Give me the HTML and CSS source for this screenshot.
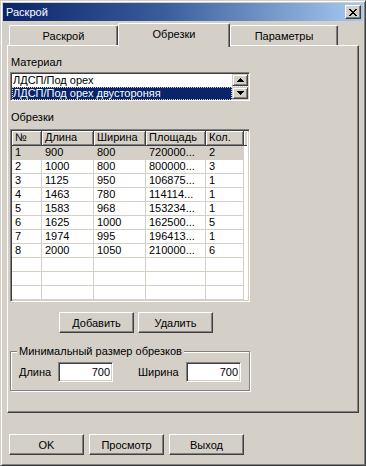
FILE: index.html
```html
<!DOCTYPE html>
<html lang="ru">
<head>
    <meta charset="UTF-8">
    <title>Раскрой</title>
    <link rel="stylesheet" href="styles.css">
</head>
<body>
    <div class="window">
        <div class="titlebar">
            <span class="title">Раскрой</span>
            <button class="close-btn" aria-label="Закрыть">
                <svg width="8" height="7" viewBox="0 0 8 7"><path d="M0 0h2v1H0z M6 0h2v1H6z M1 1h2v1H1z M5 1h2v1H5z M2 2h4v1H2z M3 3h2v1H3z M2 4h4v1H2z M1 5h2v1H1z M5 5h2v1H5z M0 6h2v1H0z M6 6h2v1H6z" fill="#000"/></svg>
            </button>
        </div>

        <div class="tabs">
            <div class="tab tab-first">Раскрой</div>
            <div class="tab tab-active">Обрезки</div>
            <div class="tab tab-last">Параметры</div>
        </div>

        <div class="panel">
            <div class="caption caption-top">Материал</div>
            <div class="listbox sunken">
                <div class="list-items">
                    <div class="list-item">ЛДСП/Под орех</div>
                    <div class="list-item selected">ЛДСП/Под орех двустороняя</div>
                </div>
                <div class="vscroll">
                    <div class="scroll-btn">
                        <svg width="7" height="4" viewBox="0 0 7 4"><path d="M3 0h1v1h1v1h1v1h1v1H0V3h1V2h1V1h1z" fill="#000"/></svg>
                    </div>
                    <div class="scroll-track"></div>
                    <div class="scroll-btn">
                        <svg width="7" height="4" viewBox="0 0 7 4"><path d="M0 0h7v1H6v1H5v1H4v1H3V3H2V2H1V1H0z" fill="#000"/></svg>
                    </div>
                </div>
            </div>

            <div class="caption">Обрезки</div>
            <div class="grid sunken">
                <div class="grid-table">
                    <div class="gh">№</div><div class="gh">Длина</div><div class="gh">Ширина</div><div class="gh">Площадь</div><div class="gh">Кол.</div><div class="gh gh-fill"></div>

                    <div class="gc sel">1</div><div class="gc sel">900</div><div class="gc sel">800</div><div class="gc sel">720000...</div><div class="gc sel">2</div><div class="gc gc-fill"></div>
                    <div class="gc">2</div><div class="gc">1000</div><div class="gc">800</div><div class="gc">800000...</div><div class="gc">3</div><div class="gc gc-fill"></div>
                    <div class="gc">3</div><div class="gc">1125</div><div class="gc">950</div><div class="gc">106875...</div><div class="gc">1</div><div class="gc gc-fill"></div>
                    <div class="gc">4</div><div class="gc">1463</div><div class="gc">780</div><div class="gc">114114...</div><div class="gc">1</div><div class="gc gc-fill"></div>
                    <div class="gc">5</div><div class="gc">1583</div><div class="gc">968</div><div class="gc">153234...</div><div class="gc">1</div><div class="gc gc-fill"></div>
                    <div class="gc">6</div><div class="gc">1625</div><div class="gc">1000</div><div class="gc">162500...</div><div class="gc">5</div><div class="gc gc-fill"></div>
                    <div class="gc">7</div><div class="gc">1974</div><div class="gc">995</div><div class="gc">196413...</div><div class="gc">1</div><div class="gc gc-fill"></div>
                    <div class="gc">8</div><div class="gc">2000</div><div class="gc">1050</div><div class="gc">210000...</div><div class="gc">6</div><div class="gc gc-fill"></div>

                    <div class="gc"></div><div class="gc"></div><div class="gc"></div><div class="gc"></div><div class="gc"></div><div class="gc gc-fill"></div>
                    <div class="gc"></div><div class="gc"></div><div class="gc"></div><div class="gc"></div><div class="gc"></div><div class="gc gc-fill"></div>
                    <div class="gc"></div><div class="gc"></div><div class="gc"></div><div class="gc"></div><div class="gc"></div><div class="gc gc-fill"></div>
                </div>
            </div>

            <div class="grid-actions">
                <button class="btn">Добавить</button>
                <button class="btn">Удалить</button>
            </div>

            <fieldset class="group">
                <legend>Минимальный размер обрезков</legend>
                <div class="group-row">
                    <label class="field-label" for="minLen">Длина</label>
                    <input class="field sunken" id="minLen" type="text" value="700">
                    <label class="field-label field-label-second" for="minWid">Ширина</label>
                    <input class="field sunken" id="minWid" type="text" value="700">
                </div>
            </fieldset>
        </div>

        <div class="footer">
            <button class="btn">OK</button>
            <button class="btn">Просмотр</button>
            <button class="btn">Выход</button>
        </div>
    </div>
</body>
</html>
```

FILE: styles.css
```css
* {
    margin: 0;
    padding: 0;
    box-sizing: border-box;
}

body {
    font-family: "Liberation Sans", Arial, sans-serif;
    font-size: 11px;
    line-height: 13px;
    color: #000;
    background: #d4d0c8;
}

.window {
    width: 366px;
    height: 466px;
    background: #d4d0c8;
    border: 1px solid;
    border-color: #d4d0c8 #404040 #404040 #d4d0c8;
    box-shadow: inset 1px 1px #fff, inset -1px -1px #808080;
    padding: 2px;
}

/* заголовок окна */
.titlebar {
    height: 18px;
    display: flex;
    align-items: center;
    padding: 0 2px 0 3px;
    background: linear-gradient(to right, #0a246a, #3a5e9c 45%, #a6caf0);
}

.title {
    color: #fff;
    font-size: 11px;
}

.close-btn {
    margin-left: auto;
    width: 16px;
    height: 14px;
    display: flex;
    align-items: center;
    justify-content: center;
    background: #d4d0c8;
    border: 1px solid;
    border-color: #fff #404040 #404040 #fff;
    box-shadow: inset -1px -1px #808080;
}

/* вкладки */
.tabs {
    display: flex;
    align-items: flex-end;
    height: 22px;
    margin: 2px 4px 0;
    padding-left: 2px;
}

.tab {
    height: 20px;
    padding-top: 4px;
    text-align: center;
    background: #d4d0c8;
    border-top: 1px solid #fff;
    border-left: 1px solid #fff;
    border-right: 1px solid #404040;
    box-shadow: inset -1px 0 #808080;
    border-radius: 2px 2px 0 0;
}

.tab-first {
    width: 109px;
}

.tab-active {
    width: 112px;
    height: 24px;
    margin-bottom: -2px;
    position: relative;
    z-index: 1;
}

.tab-last {
    width: 108px;
}

.panel {
    height: 368px;
    margin: 0 4px;
    padding: 0 2px;
    border: 1px solid;
    border-color: #fff #404040 #404040 #fff;
    box-shadow: inset -1px -1px #808080;
}

.caption {
    margin-top: 10px;
    padding-left: 1px;
}

.sunken {
    border: 1px solid;
    border-color: #808080 #fff #fff #808080;
    padding: 1px;
    box-shadow: inset 1px 1px #404040, inset -1px -1px #d4d0c8;
}

/* список материалов */
.listbox {
    width: 240px;
    height: 29px;
    margin-top: 3px;
    display: flex;
    overflow: hidden;
    background: #fff;
}

.list-items {
    flex: 1;
    background: #fff;
}

.list-item {
    height: 13px;
    padding-left: 1px;
    white-space: nowrap;
}

.list-item.selected {
    background: #0a246a;
    color: #fff;
    outline: 1px dotted #d4d0c8;
    outline-offset: -1px;
}

.vscroll {
    width: 16px;
    display: flex;
    flex-direction: column;
}

.scroll-btn {
    height: 12px;
    display: flex;
    align-items: center;
    justify-content: center;
    background: #d4d0c8;
    border: 1px solid;
    border-color: #d4d0c8 #404040 #404040 #d4d0c8;
    box-shadow: inset 1px 1px #fff, inset -1px -1px #808080;
}

.scroll-track {
    flex: 1;
    background: repeating-conic-gradient(#fff 0 25%, #d4d0c8 0 50%) 0 0 / 2px 2px;
}

/* таблица обрезков */
.grid {
    width: 240px;
    height: 173px;
    margin-top: 5px;
    overflow: hidden;
    background: #fff;
}

.grid-table {
    display: grid;
    grid-template-columns: 30px 52px 52px 60px 38px 3px;
    grid-template-rows: 15px;
    grid-auto-rows: 14px;
    background: #fff;
}

.gh {
    padding-left: 3px;
    line-height: 13px;
    background: #d4d0c8;
    border-right: 1px solid #404040;
    border-bottom: 1px solid #404040;
    box-shadow: inset 1px 1px #fff, inset -1px -1px #808080;
    white-space: nowrap;
}

.gh-fill {
    border-right: none;
    box-shadow: inset 1px 1px #fff;
}

.gc {
    padding-left: 3px;
    line-height: 13px;
    border-right: 1px solid #d4d0c8;
    border-bottom: 1px solid #d4d0c8;
    white-space: nowrap;
    overflow: hidden;
}

.gc.sel {
    background: #d4d0c8;
}

.gc-fill {
    border: none;
}

.grid-actions {
    display: flex;
    gap: 4px;
    margin: 10px 0 0 49px;
}

/* кнопки */
.btn {
    width: 75px;
    height: 21px;
    font-family: "Liberation Sans", Arial, sans-serif;
    font-size: 11px;
    color: #000;
    background: #d4d0c8;
    border: 1px solid;
    border-color: #fff #404040 #404040 #fff;
    box-shadow: inset -1px -1px #808080;
}

/* минимальный размер */
.group {
    width: 240px;
    margin-top: 12px;
    padding: 4px 8px 8px;
    min-width: 0;
    border: 1px solid #808080;
    box-shadow: 1px 1px #fff, inset 1px 1px #fff;
}

.group legend {
    margin-left: -2px;
    padding: 0 2px;
    background: #d4d0c8;
    line-height: 13px;
}

.group-row {
    display: flex;
    align-items: center;
}

.field-label {
    width: 39px;
}

.field-label-second {
    width: 48px;
    margin-left: 25px;
}

.field {
    width: 55px;
    height: 20px;
    padding: 1px 2px 1px 1px;
    text-align: right;
    font-family: "Liberation Sans", Arial, sans-serif;
    font-size: 11px;
    color: #000;
    background: #fff;
    outline: none;
}

.footer {
    display: flex;
    gap: 5px;
    margin-top: 21px;
    padding-left: 6px;
}
```
